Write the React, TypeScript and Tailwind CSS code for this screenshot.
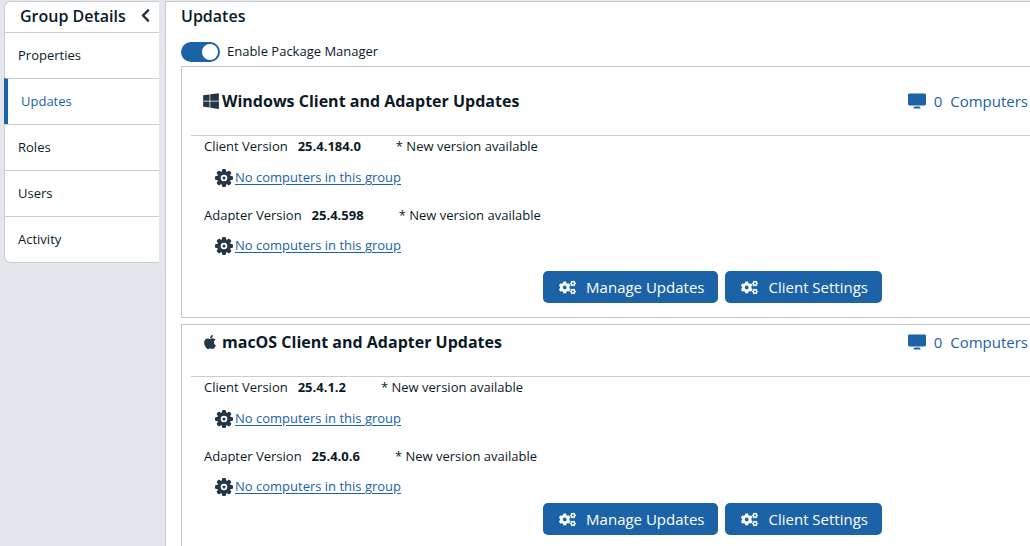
import { useState } from 'react';
import { FaApple, FaChevronLeft, FaCogs, FaWindows } from 'react-icons/fa';

const navItems = ['Properties', 'Updates', 'Roles', 'Users', 'Activity'];

const platforms = [
  {
    name: 'Windows',
    client: '25.4.184.0',
    adapter: '25.4.598',
    headerClass: 'h-[69px]',
    footerClass: 'pt-[15px] pb-[14px]',
  },
  {
    name: 'macOS',
    client: '25.4.1.2',
    adapter: '25.4.0.6',
    headerClass: 'h-[52px] pb-[17px]',
    footerClass: 'pt-[6px] pb-[14px]',
  },
];

function GearIcon() {
  return (
    <svg viewBox="0 0 18 18" className="w-[18px] h-[18px] shrink-0" fill="#243746" aria-hidden="true">
      {[0, 45, 90, 135].map((angle) => (
        <rect key={angle} x="7" y="0" width="4" height="18" rx="1.2" transform={`rotate(${angle} 9 9)`} />
      ))}
      <circle cx="9" cy="9" r="6.9" />
      <circle cx="9" cy="9" r="2.4" fill="none" stroke="#fff" strokeWidth="1.8" />
    </svg>
  );
}

function MonitorIcon() {
  return (
    <svg viewBox="0 0 18 16" className="w-[18px] h-[16px] shrink-0" fill="#1c62a6" aria-hidden="true">
      <rect x="0" y="0.4" width="18" height="12" rx="1.4" />
      <path d="M6.6 13.4h4.800l1 1c.4.5.1 1-.5 1H6.100c-.6 0-.9-.5-.5-1z" />
    </svg>
  );
}

function VersionRow({ label, version }: { label: string; version: string }) {
  return (
    <div className="flex items-center h-[20px] text-[13px] whitespace-nowrap">
      <span>{label}</span>
      <span className="ml-[10px] font-bold">{version}</span>
      <span className="ml-[35px] font-medium">* New version available</span>
    </div>
  );
}

function GroupLink() {
  return (
    <div className="flex items-center gap-[2px] h-[20px] pl-[11px]">
      <GearIcon />
      <a href="#" className="text-[13px] font-medium text-[#1c62a6] underline underline-offset-2">
        No computers in this group
      </a>
    </div>
  );
}

function ActionButton({ label }: { label: string }) {
  return (
    <button
      type="button"
      className="flex items-center gap-[10px] h-8 pl-4 pr-[14px] rounded-[5px] bg-[#1c62a6] text-white text-[15px] font-medium whitespace-nowrap"
    >
      <FaCogs size={17} />
      {label}
    </button>
  );
}

export default function App() {
  const [active, setActive] = useState('Updates');
  const [enabled, setEnabled] = useState(true);

  return (
    <div className="flex min-h-screen overflow-hidden pt-px bg-[#e3e6eb] font-['Open_Sans',sans-serif] text-[13px] text-[#0b1a26]">
      {/* Sidebar */}
      <aside className="w-[155px] shrink-0 self-start ml-1 mr-[6px]">
        <div className="flex items-center justify-between h-[31px] pl-[15px] pr-[6px] pb-[3px] bg-white border-l border-t border-[#cbcccf] rounded-tl-[6px]">
          <h2 className="text-[16px] font-semibold">Group Details</h2>
          <button type="button" aria-label="Collapse group details">
            <FaChevronLeft size={15} color="#243746" />
          </button>
        </div>
        <nav className="border-b border-[#cbcccf] rounded-bl-[6px] overflow-hidden">
          {navItems.map((item) => (
            <a
              key={item}
              href="#"
              onClick={() => setActive(item)}
              className={`flex items-center h-[46px] pl-[13px] bg-white border-t border-t-[#cbcccf] last:rounded-bl-[6px] ${
                item === active
                  ? 'border-l-4 border-l-[#1c62a6] text-[#1c62a6]'
                  : 'border-l border-l-[#cbcccf]'
              }`}
            >
              {item}
            </a>
          ))}
        </nav>
      </aside>

      {/* Updates panel */}
      <main className="flex-1 min-w-0 bg-white border-l border-t border-[#cbcccf] pl-[15px]">
        <h1 className="h-[30px] leading-[28px] text-[16px] font-semibold">Updates</h1>
        <label className="flex items-center gap-[7px] h-[34px] pt-[6px]">
          <input
            type="checkbox"
            checked={enabled}
            onChange={(e) => setEnabled(e.target.checked)}
            className="appearance-none w-[39px] h-[20px] rounded-full bg-gray-400 checked:bg-[#1c62a6] flex items-center px-[2px] before:content-[''] before:block before:w-4 before:h-4 before:rounded-full before:bg-white checked:before:ml-auto"
          />
          Enable Package Manager
        </label>

        <div className="flex flex-col gap-[6px]">
          {platforms.map((p) => (
            <section key={p.name} className="border-l border-t border-b border-[#c6c7c9] pl-[9px]">
              <div className={`flex items-center justify-between pl-[11px] pr-[2px] border-b border-[#cbcccf] ${p.headerClass}`}>
                <h2 className="flex items-center text-[16px] font-bold">
                  <span className="flex w-[20px]">
                    {p.name === 'Windows' ? (
                      <FaWindows size={18} color="#243746" />
                    ) : (
                      <FaApple size={16} color="#243746" />
                    )}
                  </span>
                  {p.name} Client and Adapter Updates
                </h2>
                <div className="flex items-center gap-2 text-[15px] font-medium text-[#1c62a6]">
                  <MonitorIcon />
                  <span>0</span>
                  <span>Computers</span>
                </div>
              </div>
              <div className="pt-px pl-[13px]">
                <VersionRow label="Client Version" version={p.client} />
                <div className="pt-[11px] pb-[18px]">
                  <GroupLink />
                </div>
                <VersionRow label="Adapter Version" version={p.adapter} />
                <div className="pt-[10px]">
                  <GroupLink />
                </div>
              </div>
              <div className={`flex justify-end gap-[7px] pr-[148px] ${p.footerClass}`}>
                <ActionButton label="Manage Updates" />
                <ActionButton label="Client Settings" />
              </div>
            </section>
          ))}
        </div>
      </main>
    </div>
  );
}
